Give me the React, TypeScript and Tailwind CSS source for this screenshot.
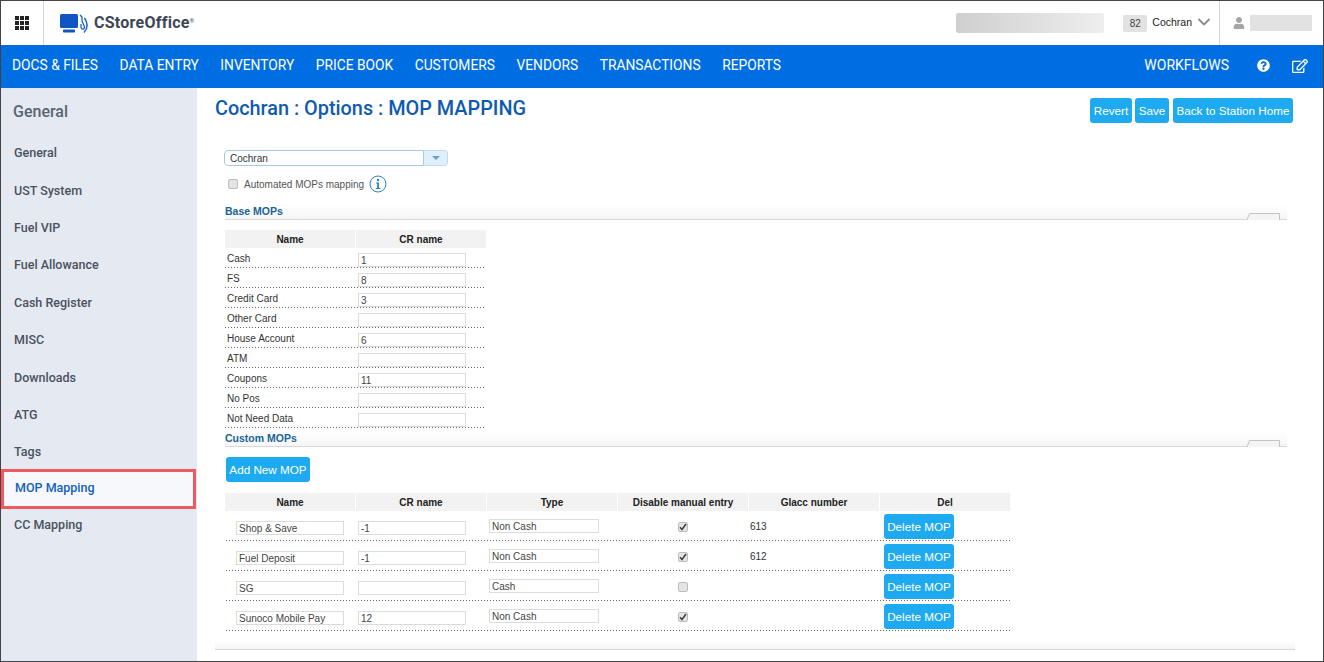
import { ChevronDown } from 'lucide-react';
import { FaQuestionCircle, FaRegEdit, FaUser } from 'react-icons/fa';

const navItems = ['DOCS & FILES', 'DATA ENTRY', 'INVENTORY', 'PRICE BOOK', 'CUSTOMERS', 'VENDORS', 'TRANSACTIONS', 'REPORTS'];
const sideItems = ['General', 'UST System', 'Fuel VIP', 'Fuel Allowance', 'Cash Register', 'MISC', 'Downloads', 'ATG', 'Tags'];
const baseRows = [
    ['Cash', '1'],
    ['FS', '8'],
    ['Credit Card', '3'],
    ['Other Card', ''],
    ['House Account', '6'],
    ['ATM', ''],
    ['Coupons', '11'],
    ['No Pos', ''],
    ['Not Need Data', ''],
];
const customRows = [
    { name: 'Shop & Save', cr: '-1', type: 'Non Cash', off: true, glacc: '613' },
    { name: 'Fuel Deposit', cr: '-1', type: 'Non Cash', off: true, glacc: '612' },
    { name: 'SG', cr: '', type: 'Cash', off: false, glacc: '' },
    { name: 'Sunoco Mobile Pay', cr: '12', type: 'Non Cash', off: true, glacc: '' },
];
const topButtons = [
    { label: 'Revert', width: 'w-[42px]' },
    { label: 'Save', width: 'w-[34px]' },
    { label: 'Back to Station Home', width: 'w-[120px] ml-px' },
];

const Field = ({ value, className }: { value: string; className: string }) => (
    <div className={`h-[14px] border border-[#dcdcdc] bg-white pl-[2px] text-[10px] leading-[14px] text-[#444] ${className}`}>{value}</div>
);

const Check = ({ on }: { on: boolean }) => (
    <span className="flex h-[10px] w-[10px] items-center justify-center rounded-[2px] border border-[#bdbdbd] bg-[#e4e4e4]">
        {on && (
            <svg width="8" height="8" viewBox="0 0 8 8">
                <path d="M1 4.2 L3 6.5 L7 1" fill="none" stroke="#444" strokeWidth="1.6" />
            </svg>
        )}
    </span>
);

const SectionTitle = ({ title }: { title: string }) => (
    <div className="relative h-[15px] w-[1062px] border-b border-[#d8d8d8] bg-gradient-to-b from-white to-[#f5f5f5]">
        <div className="text-[10.5px] font-bold leading-[13px] text-[#1a6496]">{title}</div>
        <svg className="absolute right-[6px] bottom-[-1px]" width="34" height="7" viewBox="0 0 34 7">
            <path d="M0 7 L2.5 0.5 H32.5 V7" fill="#f4f4f4" stroke="#c4c4c4" />
        </svg>
    </div>
);

const HeadCell = ({ label }: { label: string }) => (
    <div className="flex h-[18px] w-[130px] items-center justify-center bg-[#f2f2f2] text-[10px] font-bold text-[#222]">{label}</div>
);

export default function App() {
    return (
        <div className="flex h-[662px] w-[1324px] flex-col overflow-hidden border border-[#444] bg-white font-['Liberation_Sans',sans-serif] text-[#333]">
            {/* Top bar */}
            <div className="flex h-[44px] shrink-0 items-center">
                <div className="flex h-full w-[43px] items-center justify-center border-r border-[#d5d5d5]">
                    <svg width="15" height="15" viewBox="0 0 15 15" fill="#222">
                        {[0, 5, 10].map((y) =>
                            [0, 5, 10].map((x) => <rect key={`${x}-${y}`} x={x} y={y} width="4" height="4" />),
                        )}
                    </svg>
                </div>
                <div className="ml-[16px] flex items-center">
                    <svg width="29" height="19" viewBox="0 0 29 19">
                        <rect x="0" y="0" width="18" height="14" rx="1.5" fill="#0f56c4" />
                        <rect x="3" y="15.5" width="12" height="3" rx="0.8" fill="#0f56c4" />
                        <path d="M20 1 L22 3 V7 L24.2 12 C25.2 15.5 21.5 16.5 21 13 L21 10" fill="none" stroke="#1b63c8" strokeWidth="1.3" />
                        <path d="M24.5 4 C28 9 28 14 24 18.5" fill="none" stroke="#1b63c8" strokeWidth="1.5" />
                    </svg>
                    <span className="ml-[5px] font-['Roboto',sans-serif] text-[16px] font-bold tracking-[0.25px] text-[#3d4654]">CStoreOffice</span>
                    <span className="mb-[5px] font-['Roboto',sans-serif] text-[6px] leading-[6px] text-[#3d4654]">®</span>
                </div>
                <div className="ml-auto h-[20px] w-[148px] rounded-[2px] bg-gradient-to-r from-[#cfcfcf] to-[#eeeeee]" />
                <div className="ml-[19px] flex h-[17px] w-[24px] items-center justify-center rounded-[2px] bg-[#e2e2e2] text-[10px] text-[#444]">82</div>
                <span className="ml-[5px] text-[10.5px] text-[#222]">Cochran</span>
                <ChevronDown className="mb-[3px] ml-[2px] text-[#8a8a8a]" size={20} strokeWidth={2.2} />
                <div className="ml-[5px] flex h-full w-[104px] items-center border-l border-[#d5d5d5] pl-[13px]">
                    <FaUser className="text-[#a5a5a5]" size={12} />
                    <div className="ml-[5px] h-[16px] w-[62px] bg-[#e2e2e2]" />
                </div>
            </div>

            {/* Nav */}
            <div className="flex h-[43px] shrink-0 items-center bg-[#006ee3] pb-[2px] pl-[11px] font-['Roboto',sans-serif] text-[13.8px] text-white">
                <div className="flex gap-[21.5px]">
                    {navItems.map((item) => (
                        <span key={item}>{item}</span>
                    ))}
                </div>
                <span className="ml-auto text-[14px]">WORKFLOWS</span>
                <FaQuestionCircle className="ml-[28px]" size={13} />
                <FaRegEdit className="ml-[22px] mr-[15px]" size={16} />
            </div>

            <div className="flex min-h-0 flex-1">
                {/* Sidebar */}
                <div className="w-[196px] shrink-0 bg-[#e5e9f2] font-['Roboto',sans-serif] text-[#4a5260]">
                    <div className="pl-[12px] pt-[14px] text-[16px] font-medium leading-[20px] text-[#5b6470]">General</div>
                    <div className="mt-[13px] flex flex-col">
                        {sideItems.map((item) => (
                            <div key={item} className="flex h-[37.4px] items-center pl-[13px] text-[12.5px] font-medium">
                                {item}
                            </div>
                        ))}
                        <div className="-mt-[3px] flex h-[40px] w-[195px] items-center border-[3px] border-[#ee5a5f] bg-[#f6f8fb] pl-[11px] text-[12.5px] font-medium text-[#1460bd]">
                            MOP Mapping
                        </div>
                        <div className="flex h-[33px] items-center pl-[13px] text-[12.5px] font-medium">CC Mapping</div>
                    </div>
                </div>

                {/* Content */}
                <div className="min-w-0 flex-1 pl-[18px]">
                    <div className="flex h-[53px] items-start pr-[30px] pt-[10px]">
                        <h1 className="mt-px font-['Roboto',sans-serif] text-[19.85px] font-medium leading-[20px] text-[#0f5bb0]">Cochran : Options : MOP MAPPING</h1>
                        <div className="ml-auto flex gap-[3px]">
                            {topButtons.map((b) => (
                                <button key={b.label} className={`h-[25px] rounded-[3px] bg-[#1eaaf1] text-[11.7px] text-white ${b.width}`}>
                                    {b.label}
                                </button>
                            ))}
                        </div>
                    </div>

                    <div className="ml-[10px]">
                        <div className="-ml-px mt-[9px] flex h-[16px] w-[224px]">
                            <div className="h-full w-[200px] rounded-l-[4px] border border-[#a6c9e2] pl-[5px] text-[10px] leading-[15px] text-[#333]">Cochran</div>
                            <div className="flex h-full w-[24px] items-center justify-center rounded-r-[4px] border border-l-0 border-[#c5dbec] bg-[#dfeffc]">
                                <span className="h-0 w-0 border-x-[4px] border-t-[4px] border-x-transparent border-t-[#6a9fd0]" />
                            </div>
                        </div>

                        <div className="mt-[8px] flex h-[20px] items-center pl-[3px]">
                            <Check on={false} />
                            <span className="ml-[6px] text-[10px] text-[#555]">Automated MOPs mapping</span>
                            <svg className="ml-[5px]" width="18" height="18" viewBox="0 0 18 18">
                                <circle cx="9" cy="9" r="8" fill="none" stroke="#2f82c0" />
                                <circle cx="9" cy="5" r="1.2" fill="#2f82c0" />
                                <path d="M7 7.6 H10 V13 H11.5 V14 H6.8 V13 H8.2 V8.6 H7 Z" fill="#2f82c0" />
                            </svg>
                        </div>

                        <div className="mt-[11px]">
                            <SectionTitle title="Base MOPs" />
                        </div>

                        <div className="mt-[10px] flex gap-px">
                            <HeadCell label="Name" />
                            <HeadCell label="CR name" />
                        </div>
                        {baseRows.map(([name, cr]) => (
                            <div key={name} className="flex h-[20px] w-[261px] items-start bg-[linear-gradient(90deg,#666_1px,transparent_1px)] bg-[length:3px_1px] bg-bottom bg-repeat-x text-[10px] text-[#333]">
                                <span className="w-[133px] pl-[2px] pt-[3px]">{name}</span>
                                <Field value={cr} className="mt-[5px] w-[108px]" />
                            </div>
                        ))}

                        <div className="mt-[4px]">
                            <SectionTitle title="Custom MOPs" />
                        </div>

                        <button className="ml-px mt-[10px] block h-[25px] w-[84px] rounded-[3px] bg-[#1eaaf1] text-[11.7px] text-white">
                            Add New MOP
                        </button>

                        <div className="mt-[11px] flex gap-px">
                            {['Name', 'CR name', 'Type', 'Disable manual entry', 'Glacc number', 'Del'].map((label) => (
                                <HeadCell key={label} label={label} />
                            ))}
                        </div>
                        {customRows.map((row) => (
                            <div key={row.name} className="flex h-[30px] w-[785px] items-start bg-[linear-gradient(90deg,#666_1px,transparent_1px)] bg-[length:3px_1px] bg-bottom bg-repeat-x text-[10px] text-[#333]">
                                <div className="mt-[10px] w-[133px] pl-[11px]">
                                    <Field value={row.name} className="w-[108px]" />
                                </div>
                                <Field value={row.cr} className="mt-[10px] w-[108px]" />
                                <div className="ml-[23px] mt-[8px] w-[110px]">
                                    <Field value={row.type} className="w-[110px]" />
                                </div>
                                <div className="ml-[19px] mt-[11px] flex w-[130px] justify-center">
                                    <Check on={row.off} />
                                </div>
                                <span className="mt-[8px] w-[131px] pl-[2px]">{row.glacc}</span>
                                <button className="ml-[5px] mt-[3px] h-[25px] w-[70px] rounded-[3px] bg-[#1eaaf1] text-[11.7px] text-white">
                                    Delete MOP
                                </button>
                            </div>
                        ))}
                    </div>

                    <div className="mt-[9px] h-[10px] w-[1080px] border-b border-[#d8d8d8] bg-gradient-to-b from-white to-[#f5f5f5]" />
                </div>
            </div>
        </div>
    );
}
